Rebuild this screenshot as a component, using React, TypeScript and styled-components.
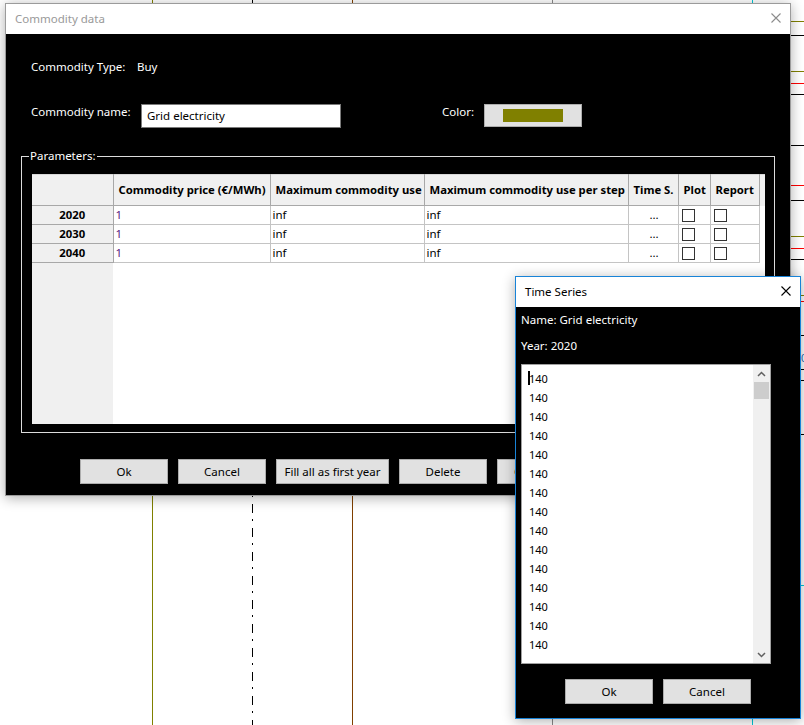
import React from "react";
import styled, { createGlobalStyle } from "styled-components";

const FONT = `"Noto Sans", "Open Sans", "DejaVu Sans", sans-serif`;

const GlobalStyle = createGlobalStyle`
  html, body { margin: 0; padding: 0; background: #fff; }
  body { font-family: ${FONT}; }
  * { box-sizing: border-box; }
`;

const Desktop = styled.div`
  position: relative;
  width: 804px;
  height: 725px;
  overflow: hidden;
  background: #fff;
  font-family: ${FONT};
  font-size: 11.5px;
`;

const Canvas = styled.svg`
  position: absolute;
  left: 0;
  top: 0;
`;

const Window = styled.div<{ $x: number; $y: number; $w: number; $h: number; $active?: boolean }>`
  position: absolute;
  left: ${(p) => p.$x}px;
  top: ${(p) => p.$y}px;
  width: ${(p) => p.$w}px;
  height: ${(p) => p.$h}px;
  border: 1px solid ${(p) => (p.$active ? "#1883d7" : "#9b9b9b")};
  background: #000;
  box-shadow: 0 2px 12px rgba(0, 0, 0, 0.32);
  display: flex;
  flex-direction: column;
`;

const TitleBar = styled.div<{ $active?: boolean }>`
  height: 30px;
  flex: none;
  background: #fff;
  display: flex;
  align-items: center;
  justify-content: space-between;
  padding: 0 9px 2px 9px;
  color: ${(p) => (p.$active ? "#000" : "#999")};
  font-size: 11.5px;
`;

const MainBody = styled.div`
  flex: 1;
  display: flex;
  flex-direction: column;
  color: #fff;
  padding-left: 15px;
`;

const InfoRow = styled.div<{ $mt: number }>`
  display: flex;
  align-items: flex-start;
  margin-top: ${(p) => p.$mt}px;
  height: 24px;
  padding-left: 10px;
`;

const Label = styled.span<{ $w?: number; $center?: boolean; $ml?: number }>`
  display: inline-block;
  ${(p) => (p.$w ? `width: ${p.$w}px;` : "")}
  ${(p) => (p.$ml ? `margin-left: ${p.$ml}px;` : "")}
  line-height: 16px;
  flex: none;
  ${(p) => (p.$center ? "align-self: center;" : "")}
`;

const TextInput = styled.div`
  width: 200px;
  height: 24px;
  background: #fff;
  border: 1px solid #7a7a7a;
  color: #000;
  display: flex;
  align-items: center;
  padding-left: 5px;
  line-height: 16px;
`;

const ColorButton = styled.div`
  width: 98px;
  height: 23px;
  background: #e1e1e1;
  border: 1px solid #adadad;
  display: flex;
  align-items: center;
  justify-content: center;
`;

const Swatch = styled.div<{ $color: string }>`
  width: 60px;
  height: 13px;
  background: ${(p) => p.$color};
`;

const GroupBox = styled.div`
  position: relative;
  margin-top: 28px;
  width: 754px;
  height: 277px;
  border: 1px solid #dcdcdc;
  padding: 17px 9px 8px 10px;
`;

const GroupLabel = styled.span`
  position: absolute;
  left: 7px;
  top: -9px;
  padding: 0 1px;
  background: #000;
  color: #fff;
  line-height: 16px;
`;

const GridBox = styled.div`
  width: 733px;
  height: 250px;
  background: linear-gradient(to right, #f0f0f0 81px, #fff 81px);
  overflow: hidden;
`;

const Table = styled.table`
  border-collapse: collapse;
  table-layout: fixed;
  width: 733px;
  color: #000;
  font-size: 11.5px;
`;

const HeadRow = styled.tr`
  height: 31px;
`;

const DataRow = styled.tr`
  height: 19px;
`;

const HeadCell = styled.th<{ $filler?: boolean }>`
  background: #f0f0f0;
  font-weight: 700;
  font-size: 11.3px;
  text-align: left;
  padding: 0 0 0 5px;
  line-height: 16px;
  white-space: nowrap;
  overflow: hidden;
  border-right: ${(p) => (p.$filler ? "none" : "1px solid #a8a8a8")};
  border-bottom: ${(p) => (p.$filler ? "none" : "1px solid #a8a8a8")};
  border-top: 1px solid #d8d8d8;
`;

const RowHead = styled.th`
  background: #f0f0f0;
  font-weight: 700;
  font-size: 11.3px;
  text-align: center;
  padding: 0;
  line-height: 16px;
  border-right: 1px solid #a8a8a8;
  border-bottom: 1px solid #a8a8a8;
`;

const Cell = styled.td<{ $align?: string; $color?: string; $filler?: boolean }>`
  padding: 0 0 0 2px;
  line-height: 16px;
  text-align: ${(p) => p.$align || "left"};
  color: ${(p) => p.$color || "#000"};
  white-space: nowrap;
  overflow: hidden;
  background: #fff;
  border-right: ${(p) => (p.$filler ? "none" : "1px solid #c4c4c4")};
  border-bottom: ${(p) => (p.$filler ? "none" : "1px solid #c4c4c4")};
`;

const CheckCell = styled.td`
  padding: 0 0 0 3px;
  background: #fff;
  border-right: 1px solid #c4c4c4;
  border-bottom: 1px solid #c4c4c4;
`;

const CheckBox = styled.span`
  display: block;
  width: 13px;
  height: 13px;
  border: 1px solid #333;
  background: #fff;
`;

const ButtonRow = styled.div<{ $mt: number; $pl: number }>`
  display: flex;
  gap: 10px;
  margin-top: ${(p) => p.$mt}px;
  padding-left: ${(p) => p.$pl}px;
`;

const Button = styled.button<{ $w?: number }>`
  width: ${(p) => p.$w || 88}px;
  height: 25px;
  flex: none;
  padding: 0;
  background: #e1e1e1;
  border: 1px solid #adadad;
  color: #000;
  font-family: ${FONT};
  font-size: 11.5px;
  white-space: nowrap;
  overflow: hidden;
`;

const TsBody = styled.div`
  flex: 1;
  display: flex;
  flex-direction: column;
  color: #fff;
  padding-left: 5px;
`;

const TsLabel = styled.div<{ $mt: number }>`
  margin-top: ${(p) => p.$mt}px;
  line-height: 16px;
  height: 16px;
`;

const TextArea = styled.div`
  margin-top: 10px;
  width: 250px;
  height: 300px;
  background: #fff;
  border: 1px solid #a0a0a0;
  display: flex;
`;

const Lines = styled.div`
  flex: 1;
  overflow: hidden;
  padding: 4px 0 0 7px;
  color: #000;
  font-size: 11px;
  line-height: 19px;
`;

const Caret = styled.span`
  display: inline-block;
  width: 2px;
  height: 14px;
  background: #000;
  vertical-align: -2px;
  margin: 0 -1px 0 -1px;
`;

const ScrollBar = styled.div`
  width: 17px;
  flex: none;
  background: #f0f0f0;
  display: flex;
  flex-direction: column;
`;

const ScrollArrow = styled.div`
  height: 17px;
  flex: none;
  display: flex;
  align-items: center;
  justify-content: center;
`;

const Thumb = styled.div`
  height: 17px;
  flex: none;
  margin: 0 1px;
  background: #cdcdcd;
`;

const Track = styled.div`
  flex: 1;
`;

const CloseIcon = ({ color }: { color: string }) => (
  <svg width="10" height="10" viewBox="0 0 10 10">
    <path d="M0.5 0.5L9.5 9.5M9.5 0.5L0.5 9.5" stroke={color} strokeWidth="1.1" />
  </svg>
);

const Chevron = ({ up }: { up?: boolean }) => (
  <svg width="9" height="6" viewBox="0 0 9 6">
    <path
      d={up ? "M1 5L4.5 1.5L8 5" : "M1 1L4.5 4.5L8 1"}
      stroke="#606060"
      strokeWidth="1.5"
      fill="none"
    />
  </svg>
);

const vLines = [
  { x: 152.5, color: "#808000" },
  { x: 252.5, color: "#000", dash: "9 6 2 7" },
  { x: 352.5, color: "#804000" },
  { x: 552.5, color: "#8a8a8a" },
  { x: 752.5, color: "#00c8d8" },
];

const hLines: [number, string][] = [
  [21, "#808000"],
  [35, "#000"],
  [71, "#808000"],
  [83, "#ff0000"],
  [94, "#000"],
  [145, "#000"],
  [185, "#ff0000"],
  [200, "#000"],
  [236, "#808000"],
  [248, "#ff0000"],
  [259, "#000"],
  [295, "#808000"],
  [301, "#ff0000"],
  [335, "#000"],
  [369, "#000"],
  [380, "#000"],
  [434, "#000"],
];

const columns = [
  { title: "Commodity price (€/MWh)", width: 157 },
  { title: "Maximum commodity use", width: 154 },
  { title: "Maximum commodity use per step", width: 204 },
  { title: "Time S.", width: 50 },
  { title: "Plot", width: 32 },
  { title: "Report", width: 49 },
];

const rows = [
  { year: "2020", price: "1", maxUse: "inf", maxStep: "inf" },
  { year: "2030", price: "1", maxUse: "inf", maxStep: "inf" },
  { year: "2040", price: "1", maxUse: "inf", maxStep: "inf" },
];

const series = Array.from({ length: 15 }, () => "140");

export default function App() {
  return (
    <Desktop>
      <GlobalStyle />
      <Canvas width="804" height="725" viewBox="0 0 804 725">
        {vLines.map((l) => (
          <line
            key={l.x}
            x1={l.x}
            y1={0}
            x2={l.x}
            y2={725}
            stroke={l.color}
            strokeWidth="1"
            strokeDasharray={l.dash}
          />
        ))}
        {hLines.map(([y, c]) => (
          <line key={y} x1={700} y1={y + 0.5} x2={804} y2={y + 0.5} stroke={c} strokeWidth="1" />
        ))}
        <line x1={790} y1={585.5} x2={804} y2={585.5} stroke="#00c8d8" strokeWidth="1" />
        <text x={801} y={362} fill="#1f6fbf" fontSize="11" fontFamily="Liberation Sans, sans-serif">
          0
        </text>
      </Canvas>

      <Window $x={5} $y={3} $w={786} $h={493}>
        <TitleBar>
          <span>Commodity data</span>
          <CloseIcon color="#8c8c8c" />
        </TitleBar>
        <MainBody>
          <InfoRow $mt={21}>
            <Label $w={106} $center>
              Commodity Type:
            </Label>
            <Label $center>Buy</Label>
          </InfoRow>
          <InfoRow $mt={25}>
            <Label $w={110}>Commodity name:</Label>
            <TextInput>Grid electricity</TextInput>
            <Label $w={42} $ml={101}>
              Color:
            </Label>
            <ColorButton>
              <Swatch $color="#808000" />
            </ColorButton>
          </InfoRow>
          <GroupBox>
            <GroupLabel>Parameters:</GroupLabel>
            <GridBox>
              <Table>
                <colgroup>
                  <col style={{ width: 81 }} />
                  {columns.map((c) => (
                    <col key={c.title} style={{ width: c.width }} />
                  ))}
                  <col style={{ width: 6 }} />
                </colgroup>
                <thead>
                  <HeadRow>
                    <HeadCell />
                    {columns.map((c) => (
                      <HeadCell key={c.title}>{c.title}</HeadCell>
                    ))}
                    <HeadCell $filler />
                  </HeadRow>
                </thead>
                <tbody>
                  {rows.map((r) => (
                    <DataRow key={r.year}>
                      <RowHead>{r.year}</RowHead>
                      <Cell $color="#5a1780">{r.price}</Cell>
                      <Cell>{r.maxUse}</Cell>
                      <Cell>{r.maxStep}</Cell>
                      <Cell $align="center">...</Cell>
                      <CheckCell>
                        <CheckBox />
                      </CheckCell>
                      <CheckCell>
                        <CheckBox />
                      </CheckCell>
                      <Cell $filler />
                    </DataRow>
                  ))}
                </tbody>
              </Table>
            </GridBox>
          </GroupBox>
          <ButtonRow $mt={26} $pl={59}>
            <Button>Ok</Button>
            <Button>Cancel</Button>
            <Button $w={113}>Fill all as first year</Button>
            <Button>Delete</Button>
            <Button>Copy data</Button>
          </ButtonRow>
        </MainBody>
      </Window>

      <Window $x={515} $y={276} $w={286} $h={443} $active>
        <TitleBar $active>
          <span>Time Series</span>
          <CloseIcon color="#000" />
        </TitleBar>
        <TsBody>
          <TsLabel $mt={5}>Name: Grid electricity</TsLabel>
          <TsLabel $mt={10}>Year: 2020</TsLabel>
          <TextArea>
            <Lines>
              {series.map((v, i) => (
                <div key={i}>
                  {i === 0 && <Caret />}
                  {v}
                </div>
              ))}
            </Lines>
            <ScrollBar>
              <ScrollArrow>
                <Chevron up />
              </ScrollArrow>
              <Thumb />
              <Track />
              <ScrollArrow>
                <Chevron />
              </ScrollArrow>
            </ScrollBar>
          </TextArea>
          <ButtonRow $mt={15} $pl={44}>
            <Button>Ok</Button>
            <Button>Cancel</Button>
          </ButtonRow>
        </TsBody>
      </Window>
    </Desktop>
  );
}
